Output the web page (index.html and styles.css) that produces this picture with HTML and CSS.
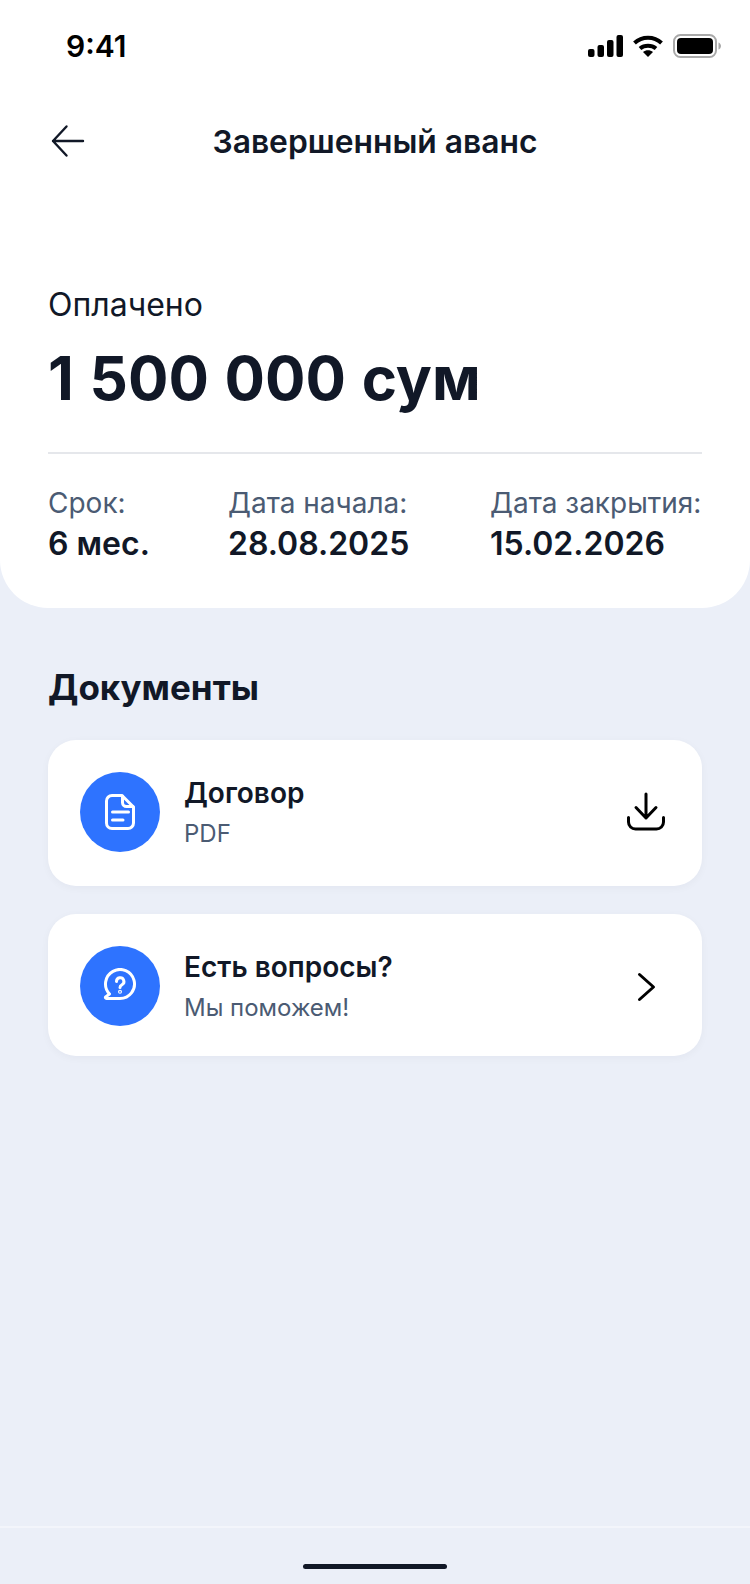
FILE: index.html
```html
<!DOCTYPE html>
<html>
<head>
	<meta charset="utf-8">
	<title>Завершенный аванс</title>
	<link rel="stylesheet" href="styles.css">
</head>
<body>
	<main class="screen">
		<section class="top">
			<div class="status">
				<span class="time">9:41</span>
				<div class="status-icons">
					<svg width="35" height="22" viewBox="0 0 35 22" fill="#000"><rect x="0" y="14" width="6.500" height="8" rx="2"/><rect x="9.500" y="10" width="6.500" height="12" rx="2"/><rect x="19" y="5" width="6.500" height="17" rx="2"/><rect x="28.500" y="0" width="6.500" height="22" rx="2"/></svg>
					<svg width="30" height="22" viewBox="0 0 30 22" fill="none" stroke="#000" stroke-width="4"><path d="M1.500 8C9 1 21 1 28.500 8"/><path d="M7 13.500c4.500-3.800 11.500-3.800 16 0"/><path d="M15 22l-5-5c2.800-2.400 7.200-2.400 10 0z" fill="#000" stroke="none"/></svg>
					<svg width="48" height="24" viewBox="0 0 48 24"><rect x="1" y="1" width="42" height="22" rx="6.500" fill="none" stroke="#a9a9a9" stroke-width="2"/><rect x="4" y="4" width="36" height="16" rx="4" fill="#000"/><path d="M45.500 8.500c1.500.5 2.500 2 2.500 3.500s-1 3-2.500 3.500z" fill="#a9a9a9"/></svg>
				</div>
			</div>
			<div class="nav">
				<svg class="back" width="36" height="36" viewBox="0 0 36 36" fill="none" stroke="#111827" stroke-width="2.400" stroke-linecap="round" stroke-linejoin="round"><path d="M33 18H3M16.500 3.500L3 18l13.500 14.500"/></svg>
				<h1>Завершенный аванс</h1>
			</div>
			<p class="paid-label">Оплачено</p>
			<p class="paid-sum">1 500 000 сум</p>
			<div class="facts">
				<div>
					<p class="fact-label">Срок:</p>
					<p class="fact-value">6 мес.</p>
				</div>
				<div>
					<p class="fact-label">Дата начала:</p>
					<p class="fact-value">28.08.2025</p>
				</div>
				<div>
					<p class="fact-label">Дата закрытия:</p>
					<p class="fact-value">15.02.2026</p>
				</div>
			</div>
		</section>
		<section class="docs">
			<h2>Документы</h2>
			<div class="card card-doc">
				<div class="circle">
					<svg width="36" height="36" viewBox="0 0 36 36" fill="none" stroke="#fff" stroke-width="3" stroke-linecap="round" stroke-linejoin="round"><path d="M4.500 7a5.500 5.500 0 0 1 5.500-5.500h10L31.500 13v16a5.500 5.500 0 0 1-5.500 5.500H10A5.500 5.500 0 0 1 4.500 29z"/><path d="M20.500 2v6.500a4 4 0 0 0 4 4H31"/><path d="M10.500 18h16M10.500 26H21"/></svg>
				</div>
				<div class="card-text">
					<p class="card-title">Договор</p>
					<p class="card-sub">PDF</p>
				</div>
				<svg class="card-action" width="40" height="40" viewBox="0 0 40 40" fill="none" stroke="#000" stroke-width="3" stroke-linecap="round" stroke-linejoin="round"><path d="M20 3v24M10 16.500L20 27l10-10.500"/><path d="M2.500 26.500V31a7 7 0 0 0 7 7h21a7 7 0 0 0 7-7v-4.500"/></svg>
			</div>
			<div class="card card-help">
				<div class="circle">
					<svg width="36" height="36" viewBox="0 0 36 36" fill="none" stroke="#fff" stroke-width="3" stroke-linecap="round" stroke-linejoin="round"><path d="M7.500 26A14.500 14.500 0 1 1 18 30.500H4.500c-1 0-1.400-1-.8-1.600z"/><path d="M14.500 13.500a3.700 3.700 0 1 1 5.500 3.200c-1.300.8-2 1.400-2 2.800"/><circle cx="18" cy="23.800" r="0.500" fill="#fff"/></svg>
				</div>
				<div class="card-text">
					<p class="card-title">Есть вопросы?</p>
					<p class="card-sub">Мы поможем!</p>
				</div>
				<svg class="card-action" width="30" height="44" viewBox="0 0 30 44" fill="none" stroke="#000" stroke-width="3" stroke-linecap="round" stroke-linejoin="round"><path d="M3.500 9.500l14 12.500-14 12.500"/></svg>
			</div>
		</section>
		<div class="bottom">
			<div class="home-bar"></div>
		</div>
	</main>
</body>
</html>
```

FILE: styles.css
```css
* {box-sizing: border-box;}
body {margin: 0; background-color: #ebeff8; font-family: 'Inter', 'Roboto', sans-serif; color: #111827;}
p, h1, h2 {margin: 0;}
.screen {width: 750px; height: 1584px; display: flex; flex-direction: column;}

.top {height: 608px; background-color: #fff; border-radius: 0 0 48px 48px; padding: 0 48px;}
.status {height: 92px; display: flex; align-items: center; justify-content: space-between; padding: 0 0 0 18px;}
.time {font-size: 30px; font-weight: 600; color: #000;}
.status-icons {display: flex; align-items: center; gap: 10px; margin-right: -19px;}
.nav {height: 50px; margin-top: 24px; display: flex; align-items: center; position: relative;}
.nav h1 {width: 100%; text-align: center; font-size: 31.800px; font-weight: 600;}
.back {position: absolute; left: 2px; top: 7px;}

.paid-label {margin-top: 119px; font-size: 32px; line-height: 40px; font-weight: 400;}
.paid-sum {margin-top: 17px; font-size: 60px; line-height: 72px; font-weight: 700; word-spacing: 1.500px;}
.facts {margin-top: 38px; padding-top: 31px; border-top: 2px solid #e5e7eb; display: grid; grid-template-columns: 180px 262px auto;}
.fact-label {font-size: 28px; line-height: 36px; color: #4b5b73; white-space: nowrap;}
.fact-value {font-size: 32px; line-height: 40px; font-weight: 600; margin-top: 3px;}

.docs {padding: 0 48px; flex: 1;}
.docs h2 {margin-top: 55px; font-size: 35px; line-height: 48px; font-weight: 700;}
.card {background-color: #fff; border-radius: 28px; display: flex; align-items: flex-start; padding: 32px 36px 0 32px; box-shadow: 0 2px 8px rgba(17, 24, 39, 0.04);}
.card-doc {height: 146px; margin-top: 29px;}
.card-help {height: 142px; margin-top: 28px;}
.circle {width: 80px; height: 80px; border-radius: 50%; background-color: #2e73ff; display: flex; align-items: center; justify-content: center;}
.card-text {flex: 1; margin: 3px 0 0 24px;}
.card-title {font-size: 28px; line-height: 36px; font-weight: 600;}
.card-sub {font-size: 24px; line-height: 32px; color: #4b5b73; margin-top: 7px;}
.card-action {margin-top: 19px;}

.bottom {height: 58px; border-top: 2px solid #f3f5fb; display: flex; justify-content: center;}
.home-bar {width: 144px; height: 5px; border-radius: 3px; background-color: #111827; margin-top: 36px;}
```
